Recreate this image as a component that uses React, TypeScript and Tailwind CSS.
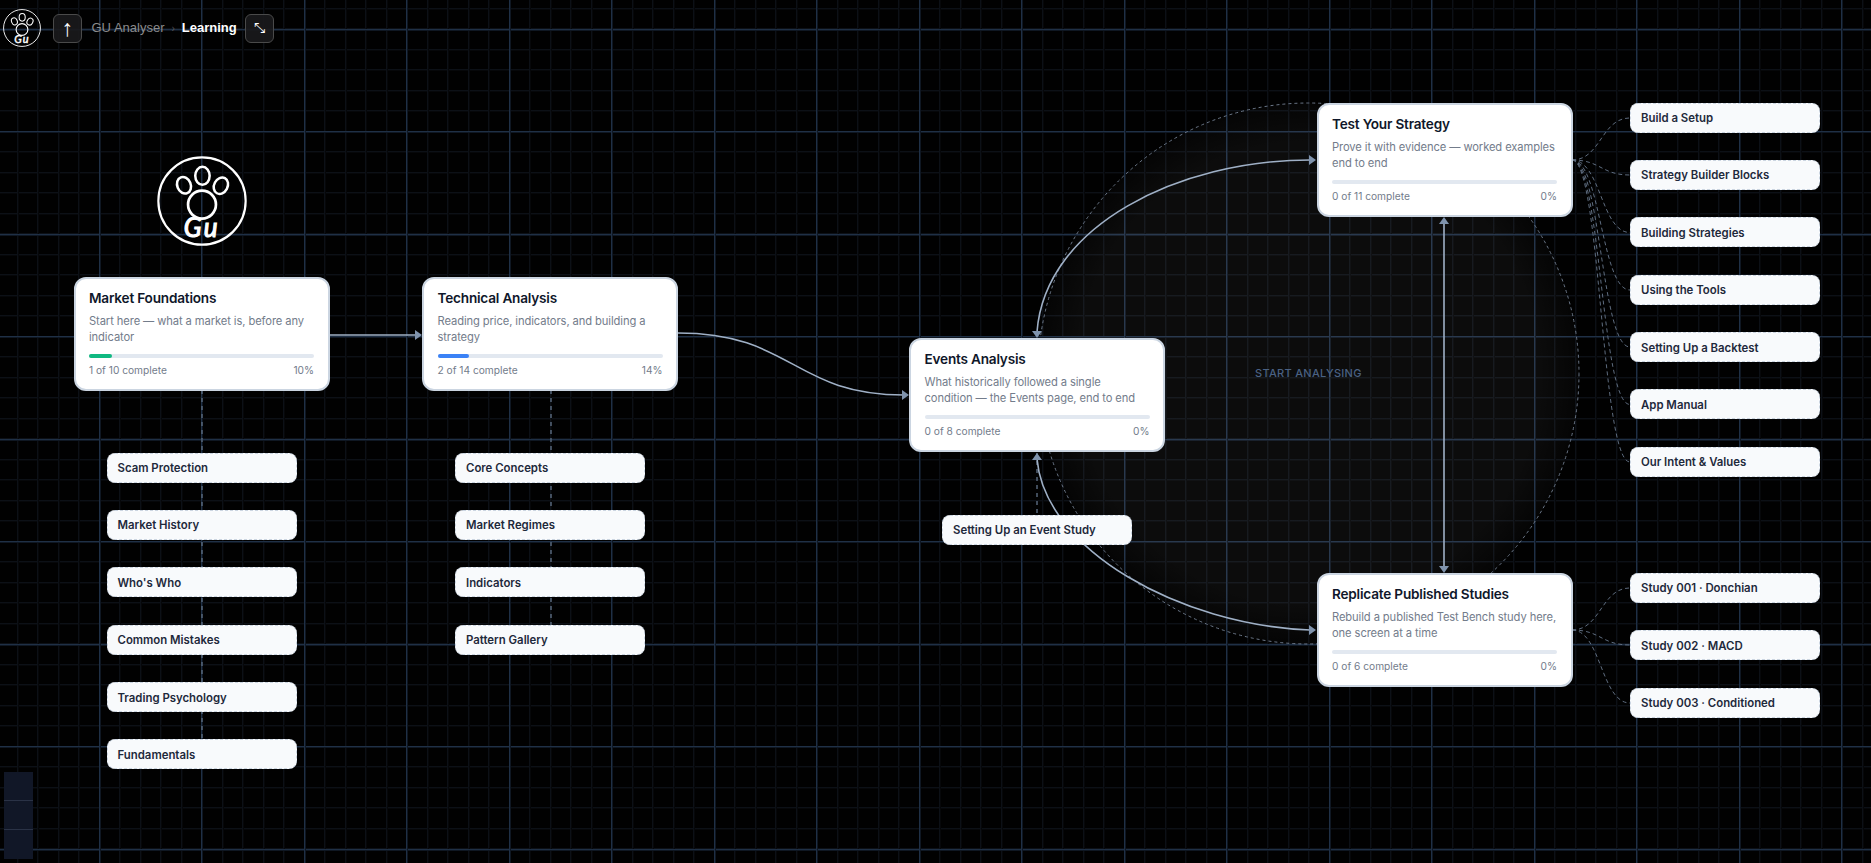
const sans = "font-['Inter','Noto_Sans',sans-serif]";

type Topic = {
  title: string;
  desc: string[];
  done: string;
  pct: number;
  bar?: string;
  pos: string;
};

const topics: Topic[] = [
  {
    title: "Market Foundations",
    desc: ["Start here — what a market is, before any", "indicator"],
    done: "1 of 10 complete",
    pct: 10,
    bar: "bg-[#10b981]",
    pos: "left-[73.5px] top-[276.5px]",
  },
  {
    title: "Technical Analysis",
    desc: ["Reading price, indicators, and building a", "strategy"],
    done: "2 of 14 complete",
    pct: 14,
    bar: "bg-[#3b82f6]",
    pos: "left-[422px] top-[276.5px]",
  },
  {
    title: "Events Analysis",
    desc: ["What historically followed a single", "condition — the Events page, end to end"],
    done: "0 of 8 complete",
    pct: 0,
    pos: "left-[909px] top-[338px]",
  },
  {
    title: "Test Your Strategy",
    desc: ["Prove it with evidence — worked examples", "end to end"],
    done: "0 of 11 complete",
    pct: 0,
    pos: "left-[1316.5px] top-[103px]",
  },
  {
    title: "Replicate Published Studies",
    desc: ["Rebuild a published Test Bench study here,", "one screen at a time"],
    done: "0 of 6 complete",
    pct: 0,
    pos: "left-[1316.5px] top-[573px]",
  },
];

const subGroups = [
  {
    pos: "left-[106.5px] top-[452.5px]",
    items: ["Scam Protection", "Market History", "Who's Who", "Common Mistakes", "Trading Psychology", "Fundamentals"],
  },
  {
    pos: "left-[455px] top-[452.5px]",
    items: ["Core Concepts", "Market Regimes", "Indicators", "Pattern Gallery"],
  },
  {
    pos: "left-[942px] top-[514.5px]",
    items: ["Setting Up an Event Study"],
  },
  {
    pos: "left-[1630px] top-[102.5px]",
    items: [
      "Build a Setup",
      "Strategy Builder Blocks",
      "Building Strategies",
      "Using the Tools",
      "Setting Up a Backtest",
      "App Manual",
      "Our Intent & Values",
    ],
  },
  {
    pos: "left-[1630px] top-[573px]",
    items: ["Study 001 · Donchian", "Study 002 · MACD", "Study 003 · Conditioned"],
  },
];

function fan(sy: number, ty: number) {
  return `M1572 ${sy} C1601 ${sy} 1601 ${ty} 1630 ${ty}`;
}

function Logo({ className }: { className: string }) {
  return (
    <svg viewBox="0 0 100 100" className={className} fill="none" stroke="white">
      <circle cx="50" cy="50" r="48.5" strokeWidth="2.4" />
      <ellipse cx="50.5" cy="22" rx="8" ry="10" strokeWidth="2.8" />
      <ellipse cx="30" cy="32.5" rx="7.5" ry="9.5" strokeWidth="2.8" transform="rotate(-22 30 32.5)" />
      <ellipse cx="71" cy="33" rx="7.5" ry="9.5" strokeWidth="2.8" transform="rotate(28 71 33)" />
      <circle cx="50" cy="54" r="15.5" strokeWidth="3" />
      <text
        x="50"
        y="90"
        textAnchor="middle"
        fontFamily="Lato, sans-serif"
        fontStyle="italic"
        fontWeight="400"
        fontSize="29"
        letterSpacing="3"
        fill="white"
        stroke="white"
        strokeWidth="1.2"
      >
        Gu
      </text>
    </svg>
  );
}

function Edges() {
  const arrow = "#7f93ad";
  const line = "#9fb0c6";
  const dash = "#56657a";
  return (
    <svg className="absolute left-0 top-0 h-[863px] w-[1871px]" viewBox="0 0 1871 863" fill="none">
      <defs>
        <radialGradient id="hub">
          <stop offset="0%" stopColor="#ffffff" stopOpacity="0.045" />
          <stop offset="85%" stopColor="#ffffff" stopOpacity="0.045" />
          <stop offset="100%" stopColor="#ffffff" stopOpacity="0.015" />
        </radialGradient>
      </defs>
      <circle cx="1308.5" cy="373.5" r="270.5" fill="url(#hub)" stroke="#6c7889" strokeWidth="1" strokeDasharray="3 3" />

      {/* dotted stems to the lessons */}
      <g stroke={dash} strokeWidth="1.5" strokeDasharray="4 4">
        <path d="M202 390V740" />
        <path d="M551 390V625" />
        <path d="M1037 453V515" />
      </g>
      <g stroke="#5f6d80" strokeWidth="1" strokeDasharray="4 3">
        {[118, 175, 232.5, 290, 347, 404.5, 462].map((y) => (
          <path key={y} d={fan(160, y)} />
        ))}
        {[588, 645, 703].map((y) => (
          <path key={y} d={fan(630, y)} />
        ))}
      </g>

      {/* main path */}
      <g stroke={line} strokeWidth="1.6">
        <path d="M329 335H416" />
        <path d="M678 333C793 333 793 395 904 395" />
        <path d="M1310 160C1180 160 1045 225 1037 332" />
        <path d="M1310 630C1180 625 1045 550 1037 459" />
        <path d="M1444 223V567" />
      </g>
      <g fill={arrow}>
        <polygon points="415,330 422,335 415,340" />
        <polygon points="902,390 909,395 902,400" />
        <polygon points="1309,155 1316,160 1309,165" />
        <polygon points="1309,625 1316,630 1309,635" />
        <polygon points="1032,331 1037,338 1042,331" />
        <polygon points="1032,460 1037,453 1042,460" />
        <polygon points="1439,224 1444,217 1449,224" />
        <polygon points="1439,566 1444,573 1449,566" />
      </g>
    </svg>
  );
}

function TopicCard({ t }: { t: Topic }) {
  return (
    <div
      className={`absolute ${t.pos} h-[114px] w-[256px] rounded-xl border-2 border-[#cbd5e1] bg-white px-[13.5px] pt-[9px] ${sans}`}
    >
      <div className="text-[13.6px] font-semibold leading-[20px] tracking-[-0.2px] text-[#0f172a]">{t.title}</div>
      <div className="mt-[5px] text-[11.2px] leading-[16px] tracking-[-0.1px] text-[#737c8b]">
        {t.desc.map((l) => (
          <div key={l} className="whitespace-nowrap">
            {l}
          </div>
        ))}
      </div>
      <div className="mt-[9px] h-[4px] w-full rounded-full bg-[#e2e8f0]">
        <div className={`h-full rounded-full ${t.bar ?? ""}`} style={{ width: `${t.pct}%` }} />
      </div>
      <div className="mt-[4px] flex justify-between text-[10.2px] leading-[16px] text-[#737c8b]">
        <span>{t.done}</span>
        <span>{t.pct}%</span>
      </div>
    </div>
  );
}

function SubNode({ label }: { label: string }) {
  return (
    <div
      className={`flex h-[30px] w-[190px] items-center whitespace-nowrap rounded-lg border border-dashed border-[#cbd5e1] bg-[#f8fafc] pl-[10px] pt-[2px] text-[11.4px] font-semibold text-[#1e293b] ${sans}`}
    >
      {label}
    </div>
  );
}

export default function App() {
  return (
    <div className="relative h-[863px] w-[1871px] overflow-hidden bg-[#010101] bg-[linear-gradient(to_right,#1f3046_1px,#0f1722_1px,#0f1722_2px,transparent_2px,transparent_102px,#1f3046_102px,#1f3046_103px,#0f1722_103px,#0f1722_104px,transparent_104px),linear-gradient(to_bottom,#1f3046_1px,#0f1722_1px,#0f1722_2px,transparent_2px,transparent_102px,#1f3046_102px,#1f3046_103px,#0f1722_103px,#0f1722_104px,transparent_104px),linear-gradient(to_right,#0c1016_1px,#060709_1px,#060709_2px,transparent_2px,transparent_20px,#0c1016_20px,#0c1016_21px,#060709_21px,#060709_22px,transparent_22px),linear-gradient(to_bottom,#0c1016_1px,#060709_1px,#060709_2px,transparent_2px,transparent_20px,#0c1016_20px,#0c1016_21px,#060709_21px,#060709_22px,transparent_22px)] [background-size:205px_205px,205px_205px,41px_41px,41px_41px] [background-position:99px_0,0_29px,17px_0,0_8px]">
      <Edges />

      <Logo className="absolute left-[157px] top-[155.5px] h-[90px] w-[90px]" />

      <div className="absolute left-[1255px] top-[365px] text-[11px] font-medium leading-[16px] tracking-[0.3px] text-[#4a6183] font-['Inter',sans-serif]">
        START ANALYSING
      </div>

      {topics.map((t) => (
        <TopicCard key={t.title} t={t} />
      ))}

      {subGroups.map((g) => (
        <div key={g.pos} className={`absolute ${g.pos} flex flex-col gap-[27.4px]`}>
          {g.items.map((s) => (
            <SubNode key={s} label={s} />
          ))}
        </div>
      ))}

      {/* top bar */}
      <div className="absolute left-[3px] top-[9px] flex items-center font-['Liberation_Sans',sans-serif] text-[13px]">
        <Logo className="h-[38px] w-[38px]" />
        <div className="ml-[12px] flex h-[29px] w-[29px] items-center justify-center rounded-md border border-[#4a4a4a] bg-[#1a1a1c]/90 text-[23px] leading-none text-white">
          ↑
        </div>
        <span className="ml-[9.5px] text-[#8c8c8c]">GU Analyser</span>
        <span className="mx-[7px] text-[10px] text-[#555555]">›</span>
        <span className="font-bold text-white">Learning</span>
        <div className="ml-[8px] flex h-[29px] w-[29px] items-center justify-center rounded-md border border-[#4a4a4a] bg-[#1a1a1c]/90 font-['DejaVu_Sans',sans-serif] text-[14px] text-white">
          ⤡
        </div>
      </div>

      {/* canvas zoom controls */}
      <div className="absolute bottom-[4px] left-[4px] flex w-[29px] flex-col bg-[#111727]">
        <div className="h-[29px] border-b border-[#2a3246]" />
        <div className="h-[29px] border-b border-[#2a3246]" />
        <div className="h-[29px]" />
      </div>
    </div>
  );
}
